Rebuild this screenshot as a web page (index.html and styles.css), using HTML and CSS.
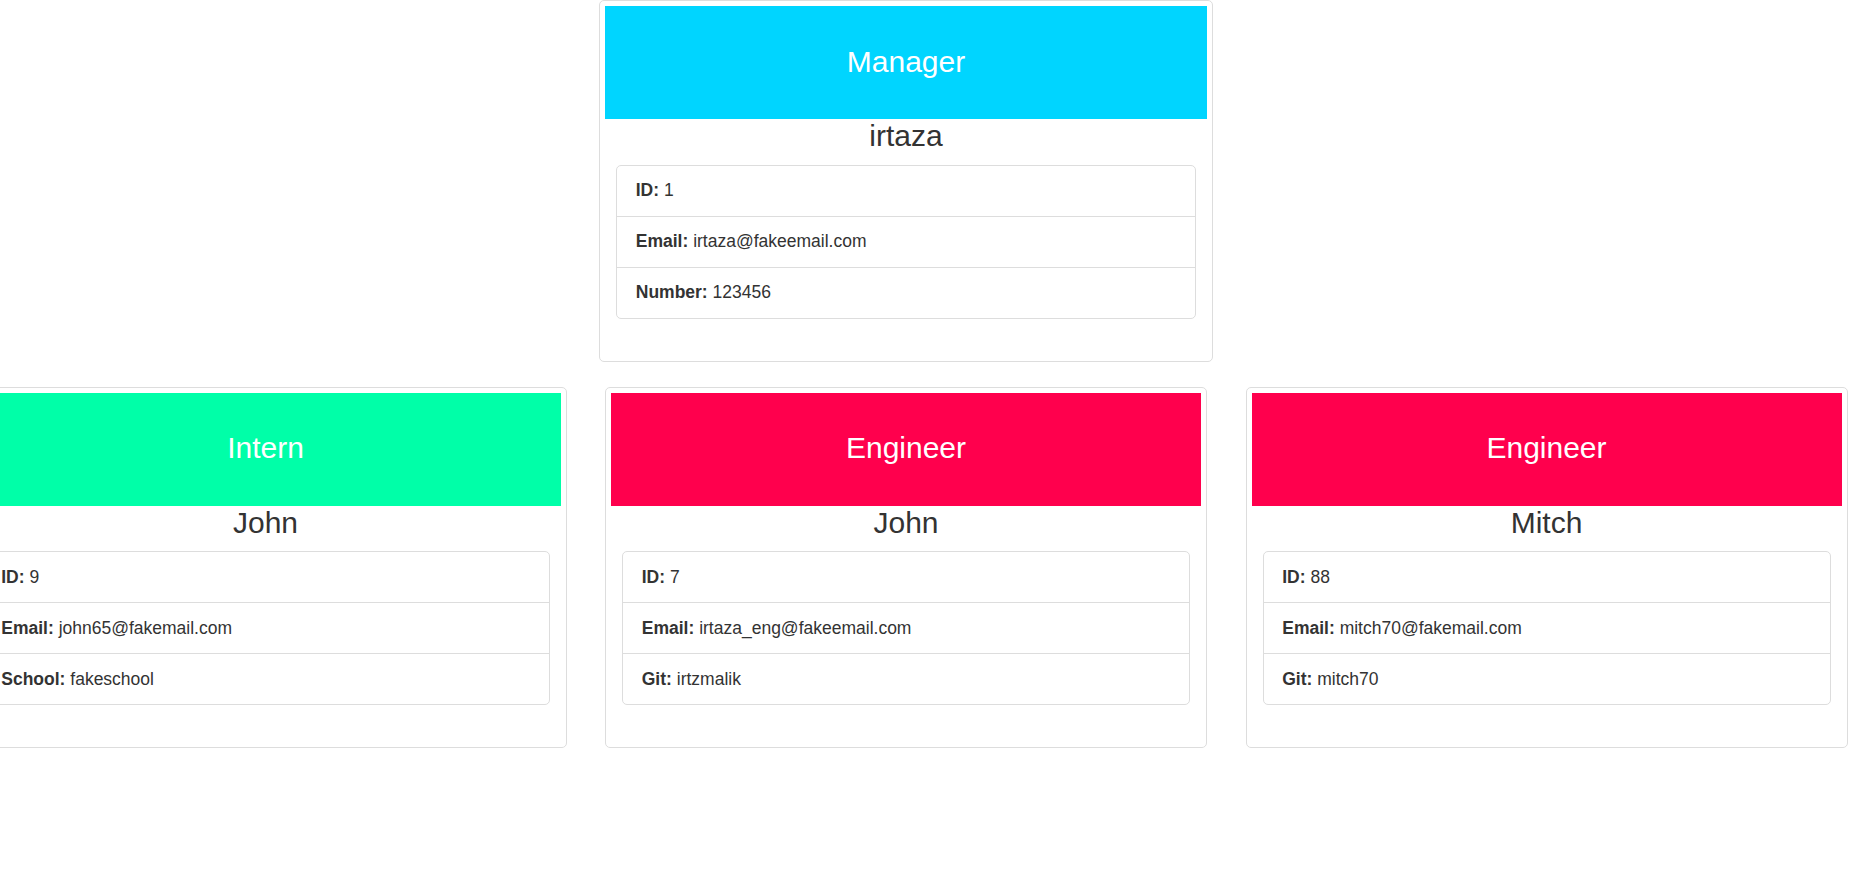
FILE: index.html
```html
<!DOCTYPE html>
<html lang="en">
<head>
<meta charset="utf-8">
<title>Team</title>
<link rel="stylesheet" href="styles.css">
</head>
<body>
<div class="team">
  <div class="row row-top">
    <div class="card card-manager">
      <h3 class="role role-manager">Manager</h3>
      <h3 class="name">irtaza</h3>
      <ul class="list">
        <li class="item"><b>ID:</b> 1</li>
        <li class="item"><b>Email:</b> irtaza@fakeemail.com</li>
        <li class="item"><b>Number:</b> 123456</li>
      </ul>
    </div>
  </div>
  <div class="row row-bottom">
    <div class="col">
      <div class="card">
        <h3 class="role role-intern">Intern</h3>
        <h3 class="name">John</h3>
        <ul class="list">
          <li class="item"><b>ID:</b> 9</li>
          <li class="item"><b>Email:</b> john65@fakemail.com</li>
          <li class="item"><b>School:</b> fakeschool</li>
        </ul>
      </div>
    </div>
    <div class="col">
      <div class="card">
        <h3 class="role role-engineer">Engineer</h3>
        <h3 class="name">John</h3>
        <ul class="list">
          <li class="item"><b>ID:</b> 7</li>
          <li class="item"><b>Email:</b> irtaza_eng@fakeemail.com</li>
          <li class="item"><b>Git:</b> irtzmalik</li>
        </ul>
      </div>
    </div>
    <div class="col">
      <div class="card">
        <h3 class="role role-engineer">Engineer</h3>
        <h3 class="name">Mitch</h3>
        <ul class="list">
          <li class="item"><b>ID:</b> 88</li>
          <li class="item"><b>Email:</b> mitch70@fakemail.com</li>
          <li class="item"><b>Git:</b> mitch70</li>
        </ul>
      </div>
    </div>
  </div>
</div>
</body>
</html>
```
FILE: styles.css
```css
html, body {
  margin: 0;
  padding: 0;
  background: #fff;
  overflow-x: hidden;
}

body {
  font-family: "Liberation Sans", Arial, Helvetica, sans-serif;
  font-size: 17.5px;
  line-height: 25px;
  color: #333;
}

.team {
  width: 1921.5px;
  margin-left: -54.75px;
}

.row {
  display: flex;
}

.row-top {
  justify-content: center;
  margin-bottom: 25px;
}

.col {
  flex: 0 0 640.5px;
  box-sizing: border-box;
  padding: 0 19.25px;
}

.card {
  border: 1px solid #ddd;
  border-radius: 5px;
  padding: 5px;
  background: #fff;
}

.card-manager {
  width: 614px;
  box-sizing: border-box;
}

.role {
  margin: 0;
  padding: 38.5px 0 41.5px;
  font-size: 30px;
  line-height: 33px;
  font-weight: normal;
  color: #fff;
  text-align: center;
}

.role-manager { background: #00d5ff; }
.role-intern { background: #00ffa8; }
.role-engineer { background: #ff004d; }

.name {
  margin: 0 0 12.5px;
  font-size: 30px;
  line-height: 33px;
  font-weight: normal;
  color: #333;
  text-align: center;
}

.list {
  list-style: none;
  margin: 0 11px 37px;
  padding: 0;
  border: 1px solid #ddd;
  border-radius: 5px;
}

.item {
  padding: 12.5px 18.75px;
  line-height: 25px;
  border-top: 1px solid #ddd;
}

.item:first-child {
  border-top: 0;
}

.item b {
  font-weight: bold;
}
```
